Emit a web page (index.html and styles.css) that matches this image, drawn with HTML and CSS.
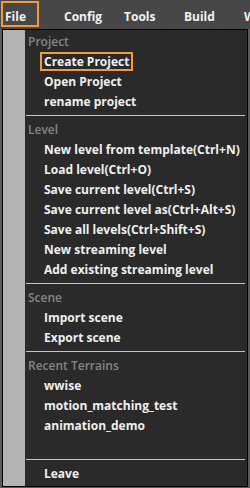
FILE: index.html
```html
<!DOCTYPE html>
<html>
<head>
    <title>File menu</title>
    <link rel="stylesheet" href="styles.css">
</head>
<body>
  <div class="menubar">
    <span class="menu-title"><span class="active">File</span></span>
    <span class="menu-title">Config</span>
    <span class="menu-title">Tools</span>
    <span class="menu-title">Build</span>
    <span class="menu-title">W</span>
  </div>
  <div class="dropdown">
    <div class="strip"></div>
    <div class="items">
      <div class="header">Project</div>
      <div class="item"><span class="selected">Create Project</span></div>
      <div class="item">Open Project</div>
      <div class="item">rename project</div>
      <div class="sep"></div>
      <div class="header">Level</div>
      <div class="item">New level from template(Ctrl+N)</div>
      <div class="item">Load level(Ctrl+O)</div>
      <div class="item">Save current level(Ctrl+S)</div>
      <div class="item">Save current level as(Ctrl+Alt+S)</div>
      <div class="item">Save all levels(Ctrl+Shift+S)</div>
      <div class="item">New streaming level</div>
      <div class="item">Add existing streaming level</div>
      <div class="sep"></div>
      <div class="header">Scene</div>
      <div class="item">Import scene</div>
      <div class="item">Export scene</div>
      <div class="sep"></div>
      <div class="header">Recent Terrains</div>
      <div class="item">wwise</div>
      <div class="item">motion_matching_test</div>
      <div class="item">animation_demo</div>
      <div class="item"></div>
      <div class="sep"></div>
      <div class="item">Leave</div>
    </div>
  </div>
</body>
</html>
```

FILE: styles.css
```css
body {
    margin: 0;
    background-color: #5a5a5a;
    font-family: "Open Sans", sans-serif;
    font-size: 12px;
    overflow: hidden;
}

.menubar {
    height: 28px;
    padding-top: 1px;
    background-color: #474747;
    display: flex;
    align-items: flex-start;
    color: #f2f2f2;
    font-weight: 700;
    font-size: 12px;
    white-space: nowrap;
    overflow: hidden;
}

.menu-title {
    flex: none;
    width: 60px;
    height: 28px;
    line-height: 32px;
    padding-left: 4px;
    box-sizing: border-box;
}

.menu-title:first-child {
    padding-left: 1px;
}

.active {
    display: inline-block;
    vertical-align: top;
    width: 32px;
    height: 22px;
    line-height: 28px;
    padding-left: 2px;
    border: 2px solid #f59a3c;
}

.dropdown {
    margin-left: 2px;
    width: 244px;
    height: 456px;
    border: 1px solid #000;
    display: flex;
    background-color: #2a2a2a;
}

.strip {
    width: 22px;
    background-color: #b3b3b3;
}

.items {
    flex: 1;
    padding-top: 2px;
    padding-right: 2px;
}

.header {
    height: 20px;
    line-height: 20px;
    padding-left: 3px;
    color: #858585;
    font-weight: 600;
}

.item {
    height: 20px;
    line-height: 20px;
    padding-left: 19px;
    color: #f0f0f0;
    font-weight: 700;
}

.selected {
    display: inline-block;
    height: 15px;
    line-height: 15px;
    margin-left: -4px;
    padding: 0 2px;
    border: 2px solid #f59a3c;
}

.sep {
    height: 1px;
    margin: 3px 0 4px 1px;
    background-color: #c4c4c4;
}
```
